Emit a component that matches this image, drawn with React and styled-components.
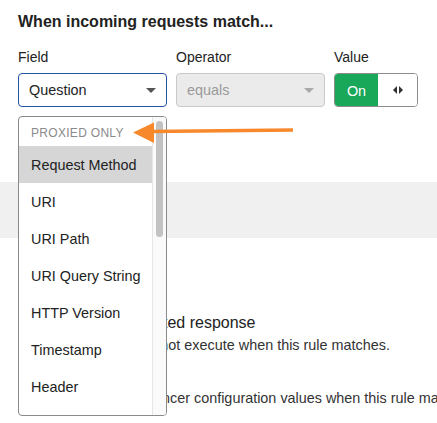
import styled, { createGlobalStyle } from "styled-components";

const GlobalStyle = createGlobalStyle`
  * { box-sizing: border-box; }
  body {
    margin: 0;
    background: #fff;
    color: #222;
    font-family: "Liberation Sans", Arial, sans-serif;
    overflow: hidden;
  }
`;

const fields = [
  "URI",
  "URI Path",
  "URI Query String",
  "HTTP Version",
  "Timestamp",
  "Header",
];

const App = () => (
  <>
    <GlobalStyle />
    <Page>
      <Title>When incoming requests match...</Title>
      <FilterGrid>
        <Label>Field</Label>
        <Label>Operator</Label>
        <Label>Value</Label>
        <Select $focused>
          <span>Question</span>
          <Caret />
        </Select>
        <Select $disabled>
          <span>equals</span>
          <Caret $disabled />
        </Select>
        <Toggle>
          <ToggleOn>On</ToggleOn>
          <ToggleHandle>
            <svg width="10" height="8" viewBox="0 0 10 8">
              <path d="M4 0 L0 4 L4 8 Z" fill="#333" />
              <path d="M6 0 L10 4 L6 8 Z" fill="#333" />
            </svg>
          </ToggleHandle>
        </Toggle>
      </FilterGrid>

      <GreyBand />

      <Setting>
        <SettingTitle>Block all app generated response</SettingTitle>
        <SettingText>
          Other Page Rules will not execute when this rule matches.
        </SettingText>
      </Setting>
      <Setting>
        <SettingTitle>Origin</SettingTitle>
        <SettingText>
          Override this load balancer configuration values when this rule
          matches.
        </SettingText>
      </Setting>

      <Menu>
        <MenuList>
          <GroupHeader>Proxied only</GroupHeader>
          <Option $active>Request Method</Option>
          {fields.map((f) => (
            <Option key={f}>{f}</Option>
          ))}
        </MenuList>
        <ScrollTrack>
          <ScrollThumb />
        </ScrollTrack>
      </Menu>

      <Arrow width="170" height="30" viewBox="130 118 170 30">
        <line
          x1="293"
          y1="130"
          x2="150"
          y2="131.6"
          stroke="#f7892c"
          strokeWidth="3.5"
        />
        <polygon points="133,132.6 154,122.5 154,143" fill="#f7892c" />
      </Arrow>
    </Page>
  </>
);

const Page = styled.div`
  position: relative;
  width: 437px;
  height: 423px;
  padding: 12px 0 0 18px;
  overflow: hidden;
`;

const Title = styled.h2`
  margin: 0 0 15px;
  font-size: 16px;
  line-height: 20px;
  font-weight: 600;
  color: #222;
`;

const FilterGrid = styled.div`
  display: grid;
  grid-template-columns: 149px 149px 84px;
  column-gap: 9px;
  row-gap: 6px;
`;

const Label = styled.div`
  font-size: 14px;
  line-height: 20px;
  color: #222;
`;

const Select = styled.div`
  height: 34px;
  display: flex;
  align-items: center;
  justify-content: space-between;
  padding: 0 10px;
  font-size: 14.4px;
  border-radius: 4px;
  border: 1px solid ${(p) => (p.$focused ? "#2353a5" : "#c9c9c9")};
  background: ${(p) => (p.$disabled ? "#ebebeb" : "#fff")};
  color: ${(p) => (p.$disabled ? "#9a9a9a" : "#222")};
`;

const Caret = styled.span`
  width: 0;
  height: 0;
  margin-top: 1px;
  border-left: 5px solid transparent;
  border-right: 5px solid transparent;
  border-top: 5px solid ${(p) => (p.$disabled ? "#a8a8a8" : "#555")};
`;

const Toggle = styled.div`
  height: 34px;
  display: flex;
  border: 1px solid #8c8c8c;
  border-radius: 4px;
  overflow: hidden;
`;

const ToggleOn = styled.div`
  width: 43px;
  display: flex;
  align-items: center;
  justify-content: center;
  background: #19a75a;
  color: #fff;
  font-size: 14.4px;
  padding-top: 1px;
`;

const ToggleHandle = styled.div`
  flex: 1;
  display: flex;
  align-items: center;
  justify-content: center;
  background: #fff;
`;

const GreyBand = styled.div`
  margin: 75px 0 0 -18px;
  width: 460px;
  height: 56px;
  background: #f0f0f0;
`;

const Setting = styled.div`
  margin-top: 75px;

  & + & {
    margin-top: 11px;
  }
`;

const SettingTitle = styled.div`
  font-size: 16px;
  line-height: 20px;
  color: #222;
  white-space: nowrap;
`;

const SettingText = styled.div`
  margin-top: 2px;
  font-size: 14.4px;
  line-height: 20px;
  color: #333;
  white-space: nowrap;
`;

const Menu = styled.div`
  position: absolute;
  top: 116px;
  left: 18px;
  width: 149px;
  height: 300px;
  display: flex;
  background: #fff;
  border: 1px solid #8a8a8a;
  border-radius: 4px;
  overflow: hidden;
`;

const MenuList = styled.div`
  flex: 1;
  overflow: hidden;
`;

const GroupHeader = styled.div`
  height: 29px;
  padding: 3px 0 0 12px;
  display: flex;
  align-items: center;
  font-size: 12px;
  text-transform: uppercase;
  letter-spacing: 0.3px;
  color: #8a8a8a;
`;

const Option = styled.div`
  height: 37px;
  display: flex;
  align-items: center;
  padding-left: 12px;
  font-size: 14.4px;
  color: #222;
  background: ${(p) => (p.$active ? "#d6d6d6" : "transparent")};
`;

const ScrollTrack = styled.div`
  width: 14px;
  padding: 4px 0 0 3px;
  background: #fafafa;
  border-left: 1px solid #e6e6e6;
`;

const ScrollThumb = styled.div`
  width: 7px;
  height: 116px;
  border-radius: 4px;
  background: #c2c2c2;
`;

const Arrow = styled.svg`
  position: absolute;
  left: 130px;
  top: 118px;
`;

export default App;
